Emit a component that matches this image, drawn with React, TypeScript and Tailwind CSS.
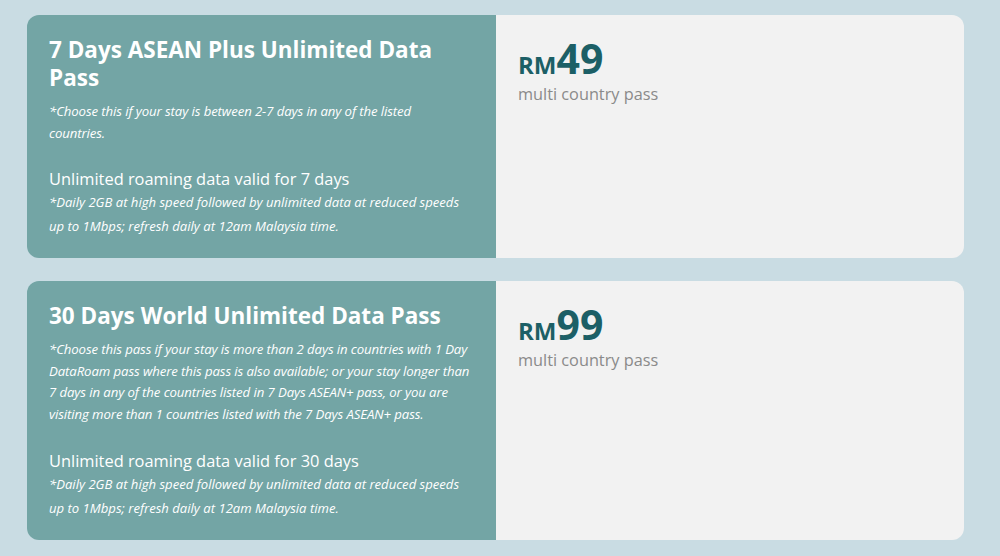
const plans = [
  {
    title: '7 Days ASEAN Plus Unlimited Data Pass',
    note: ['*Choose this if your stay is between 2-7 days in any of the listed', 'countries.'],
    validity: 'Unlimited roaming data valid for 7 days',
    price: '49',
  },
  {
    title: '30 Days World Unlimited Data Pass',
    note: [
      '*Choose this pass if your stay is more than 2 days in countries with 1 Day',
      'DataRoam pass where this pass is also available; or your stay longer than',
      '7 days in any of the countries listed in 7 Days ASEAN+ pass, or you are',
      'visiting more than 1 countries listed with the 7 Days ASEAN+ pass.',
    ],
    validity: 'Unlimited roaming data valid for 30 days',
    price: '99',
  },
]

const PlanCard = ({ plan }: { plan: (typeof plans)[number] }) => {
  return (
    <div className="flex rounded-[12px] overflow-hidden">
      <div className="w-[469px] shrink-0 bg-[#73a5a5] text-white pl-[22px] pr-[20px] pt-[21px] pb-[20px]">
        <h2 className="text-[22.5px] leading-[28px] font-bold pr-[20px]">{plan.title}</h2>
        <p className="mt-[9px] text-[13.2px] leading-[21.6px] italic tracking-[-0.1px]">
          {plan.note.map((line) => (
            <span key={line} className="block whitespace-nowrap">{line}</span>
          ))}
        </p>
        <p className="mt-[24px] text-[16.4px] leading-[22px]">{plan.validity}</p>
        <p className="text-[13.1px] leading-[24px] italic">
          *Daily 2GB at high speed followed by unlimited data at reduced speeds
          <br />
          up to 1Mbps; refresh daily at 12am Malaysia time.
        </p>
      </div>
      <div className="flex-1 bg-[#f2f2f2] pl-[22px] pt-[20px]">
        <div className="flex items-baseline text-[#1c5f66] font-bold">
          <span className="text-[24px]">RM</span>
          <span className="text-[41px] leading-[46px]">{plan.price}</span>
        </div>
        <div className="text-[16.3px] text-[#8a8a8a] leading-[22px]">multi country pass</div>
      </div>
    </div>
  )
}

export default function App() {
  return (
    <div className="w-[1000px] h-[556px] bg-[#c9dce3] pl-[27px] pr-[36px] pt-[15px] flex flex-col gap-[23px] font-['Open_Sans',sans-serif]">
      {plans.map((p) => (
        <PlanCard key={p.price} plan={p} />
      ))}
    </div>
  )
}
